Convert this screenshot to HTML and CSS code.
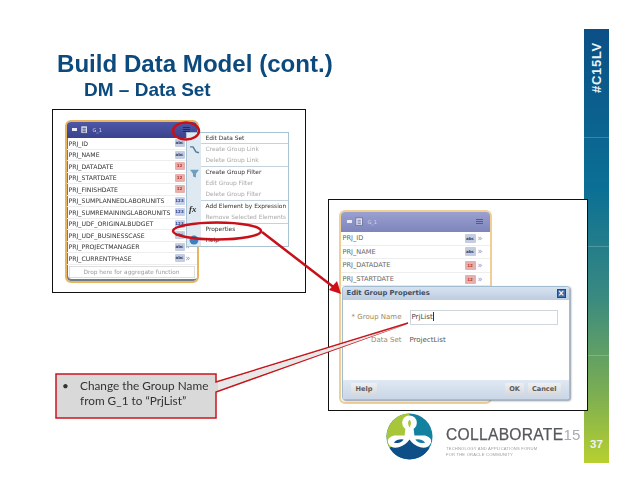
FILE: index.html
```html
<!DOCTYPE html>
<html lang="en">
<head>
    <meta charset="UTF-8">
    <title>Build Data Model (cont.)</title>
    <link rel="stylesheet" href="styles.css">
</head>
<body>
<div class="slide">

    <!-- Titles -->
    <header class="titulos">
        <h1>Build Data Model (cont.)</h1>
        <h2>DM – Data Set</h2>
    </header>

    <!-- Side band -->
    <aside class="banda">
        <span class="hashtag">#C15LV</span>
        <span class="pagina">37</span>
    </aside>

    <!-- First screenshot: group menu -->
    <section class="captura captura-menu">
        <div class="panel panel-chico">
            <div class="panel-head">
                <span class="cuadrito"></span>
                <svg class="icono-grupo" viewBox="0 0 12 12"><rect x="1" y="1" width="8" height="9" fill="#d5d9ea" stroke="#39427f"/><path d="M3 4h4M3 6h4M3 8h4" stroke="#39427f"/></svg>
                <span class="panel-nombre">G_1</span>
                <span class="panel-menu"><i></i><i></i><i></i></span>
            </div>
            <ul class="filas">
                <li>PRJ_ID<b class="tipo abc">abc</b></li>
                <li>PRJ_NAME<b class="tipo abc">abc</b></li>
                <li>PRJ_DATADATE<b class="tipo fecha">12</b></li>
                <li>PRJ_STARTDATE<b class="tipo fecha">12</b></li>
                <li>PRJ_FINISHDATE<b class="tipo fecha">12</b></li>
                <li>PRJ_SUMPLANNEDLABORUNITS<b class="tipo num">123</b></li>
                <li>PRJ_SUMREMAININGLABORUNITS<b class="tipo num">123</b></li>
                <li>PRJ_UDF_ORIGINALBUDGET<b class="tipo num">123</b></li>
                <li>PRJ_UDF_BUSINESSCASE<b class="tipo abc">abc</b></li>
                <li>PRJ_PROJECTMANAGER<b class="tipo abc">abc</b><em>»</em></li>
                <li>PRJ_CURRENTPHASE<b class="tipo abc">abc</b><em>»</em></li>
            </ul>
            <div class="soltar">Drop here for aggregate function</div>
        </div>

        <div class="menu">
            <div class="menu-iconos">
                <svg viewBox="0 0 14 114">
                    <path d="M3 14l3 0 3 5 3 1" fill="none" stroke="#4f7f96" stroke-width="1.5"/>
                    <path d="M3 37h9l-3 4v4l-3-1v-3z" fill="#6f9fc0"/>
                    <text x="2" y="80" class="fx">fx</text>
                    <circle cx="7" cy="108" r="4.5" fill="#3d7fc0"/>
                </svg>
            </div>
            <ul>
                <li class="sep">Edit Data Set</li>
                <li class="off">Create Group Link</li>
                <li class="off sep">Delete Group Link</li>
                <li>Create Group Filter</li>
                <li class="off">Edit Group Filter</li>
                <li class="off sep">Delete Group Filter</li>
                <li>Add Element by Expression</li>
                <li class="off sep">Remove Selected Elements</li>
                <li>Properties</li>
                <li>Help</li>
            </ul>
        </div>
    </section>

    <!-- Second screenshot: properties dialog -->
    <section class="captura captura-dialogo">
        <div class="panel panel-grande">
            <div class="panel-head">
                <span class="cuadrito"></span>
                <svg class="icono-grupo" viewBox="0 0 12 12"><rect x="1" y="1" width="8" height="9" fill="#e3e5f0" stroke="#6a70a0"/><path d="M3 4h4M3 6h4M3 8h4" stroke="#6a70a0"/></svg>
                <span class="panel-nombre">G_1</span>
                <span class="panel-menu"><i></i><i></i><i></i></span>
            </div>
            <ul class="filas">
                <li>PRJ_ID<b class="tipo abc">abc</b><em>»</em></li>
                <li>PRJ_NAME<b class="tipo abc">abc</b><em>»</em></li>
                <li>PRJ_DATADATE<b class="tipo fecha">12</b><em>»</em></li>
                <li>PRJ_STARTDATE<b class="tipo fecha">12</b><em>»</em></li>
            </ul>
        </div>

        <div class="dialogo">
            <div class="dialogo-titulo">
                <span>Edit Group Properties</span>
                <span class="cerrar">×</span>
            </div>
            <div class="dialogo-cuerpo">
                <div class="campo">
                    <label>* Group Name</label>
                    <div class="entrada">PrjList<span class="cursor"></span></div>
                </div>
                <div class="campo">
                    <label>Data Set</label>
                    <span>ProjectList</span>
                </div>
            </div>
            <div class="dialogo-pie">
                <span class="boton boton-ayuda">Help</span>
                <span class="relleno"></span>
                <span class="boton">OK</span>
                <span class="boton">Cancel</span>
            </div>
        </div>
    </section>

    <!-- Red annotations over the screenshots -->
    <svg class="notas" viewBox="0 0 638 493">
        <ellipse cx="186" cy="131" rx="13" ry="8.5" class="trazo"/>
        <ellipse cx="217" cy="231" rx="44" ry="8.5" class="trazo"/>
        <path d="M262 232L336 289" class="trazo"/>
        <path d="M341 294L329 290 337 281z" fill="#d01018"/>
        <path d="M56 374H216V382L408 323 216 392V418H56z" fill="#d9d9d9" stroke="#c8161d" stroke-width="1.5"/>
        <path d="M218 382.5L404 325 218 390z" fill="#e8e8e8"/>
    </svg>

    <!-- Callout -->
    <div class="llamada">
        <span class="vineta">•</span>
        <p>Change the Group Name<br>from G_1 to “PrjList”</p>
    </div>

    <!-- Logo -->
    <div class="logo">
        <svg class="logo-marca" viewBox="0 0 48 48">
            <circle cx="24" cy="24" r="23.5" fill="#12829f"/>
            <path d="M24 24L3.7 35.7A23.5 23.5 0 0 1 24 .5z" fill="#a8c63a"/>
            <path d="M24 24L44.3 35.7A23.5 23.5 0 0 1 3.7 35.7z" fill="#0e4f87"/>
            <circle cx="24" cy="10" r="7.5" fill="#fff"/>
            <path d="M20 14L19 23 8 23Q1 25 2 30 5 37 13 35 20 33 24 27 28 33 35 35 43 37 46 30 47 25 40 23L29 23 28 14z" fill="#fff"/>
            <path d="M24 7Q27 10 24 15 21 10 24 7z" fill="#a8c63a"/>
            <path d="M8 30Q12 26 18 27 15 32 8 30z" fill="#0e4f87"/>
            <path d="M40 30Q36 26 30 27 33 32 40 30z" fill="#12829f"/>
        </svg>
        <div class="logo-textos">
            <div class="logo-nombre">COLLABORATE<span>15</span></div>
            <div class="logo-lema">TECHNOLOGY AND APPLICATIONS FORUM<br>FOR THE ORACLE COMMUNITY</div>
        </div>
    </div>

</div>
</body>
</html>
```

FILE: styles.css
```css
html, body {
    margin: 0;
    background-color: white;
}
.slide {
    position: relative;
    width: 638px;
    height: 493px;
    overflow: hidden;
    font-family: "Liberation Sans", Arial, sans-serif;
    filter: blur(0.4px);
}

/* titles */
.titulos {
    padding: 50px 0 0 57px;
    color: #0c4a7e;
}
.titulos h1 {
    margin: 0;
    font-size: 24.1px;
    line-height: 28px;
}
.titulos h2 {
    margin: 0 0 0 27px;
    font-size: 19px;
    line-height: 24px;
}

/* side band */
.banda {
    position: absolute;
    left: 584px;
    top: 29px;
    width: 25px;
    height: 434px;
    display: flex;
    flex-direction: column;
    align-items: center;
    justify-content: space-between;
    background:
        repeating-linear-gradient(transparent 0 108px, rgba(255, 255, 255, 0.2) 108px 109px),
        linear-gradient(#0b4f86 0%, #0b7095 37%, #3a8a80 62%, #7fb050 85%, #b7d030 100%);
    color: #eef3f6;
    font-weight: bold;
}
.hashtag {
    margin-top: 13px;
    writing-mode: vertical-rl;
    transform: rotate(180deg);
    font-size: 13px;
    letter-spacing: 0.7px;
}
.pagina {
    margin-bottom: 13px;
    font-size: 11.5px;
}

/* screenshots */
.captura {
    position: absolute;
    box-sizing: border-box;
    background-color: white;
    border: 1.5px solid #111;
}
.captura-menu {
    left: 52px;
    top: 109px;
    width: 254px;
    height: 184px;
}
.captura-dialogo {
    left: 328px;
    top: 199px;
    width: 260px;
    height: 212px;
}

/* data set panel */
.panel {
    position: absolute;
    box-sizing: border-box;
    background-color: white;
    border-style: solid;
    border-color: #e9b65e;
    overflow: hidden;
    font-family: "DejaVu Sans", sans-serif;
    color: #333;
}
.panel-chico {
    left: 11.5px;
    top: 9.5px;
    width: 134px;
    height: 163px;
    border-width: 2.5px;
    border-radius: 6px;
    font-size: 6.2px;
    box-shadow: inset 1px -2px 0 #6f7c8a;
}
.panel-grande {
    left: 9.5px;
    top: 9.5px;
    width: 153px;
    height: 194px;
    border-width: 2.5px;
    border-radius: 6px;
    border-color: #f0cf96;
    font-size: 6.6px;
    color: #666;
}
.panel-head {
    display: flex;
    align-items: center;
    gap: 3px;
    padding: 0 5px;
    background: linear-gradient(#4f58a6, #39428e);
    color: #d5d8ee;
    font-size: 5px;
}
.panel-chico .panel-head {
    height: 16.5px;
}
.panel-grande .panel-head {
    height: 20.5px;
    padding-left: 6px;
    background: linear-gradient(#9aa0cf, #7e85bb);
}
.cuadrito {
    width: 5px;
    height: 3px;
    background-color: #e8eaf6;
}
.icono-grupo {
    width: 10px;
    height: 10px;
}
.panel-menu {
    margin-left: auto;
    display: flex;
    flex-direction: column;
    gap: 1px;
    margin-right: 2px;
}
.panel-menu i {
    display: block;
    width: 7px;
    height: 1px;
    background-color: #222b60;
}
.panel-grande .panel-menu i {
    background-color: #545a88;
}
.filas {
    list-style: none;
    margin: 0;
    padding: 0;
}
.filas li {
    display: flex;
    align-items: center;
    border-bottom: 1px solid #eee;
    padding-left: 2px;
    white-space: nowrap;
}
.panel-chico .filas li {
    height: 11.5px;
    box-sizing: border-box;
}
.panel-grande .filas li {
    height: 13.6px;
    box-sizing: border-box;
}
.tipo {
    position: absolute;
    box-sizing: border-box;
    width: 10px;
    height: 8px;
    line-height: 8px;
    text-align: center;
    font-size: 4px;
    border-radius: 1px;
}
.panel-chico .tipo {
    left: 108px;
}
.panel-grande .tipo {
    left: 124px;
    width: 11px;
    height: 9px;
    line-height: 9px;
}
.abc {
    background-color: #c5cee0;
    color: #33406f;
}
.fecha {
    background-color: #e8b0ac;
    color: #b03a34;
}
.num {
    background-color: #c6d0ea;
    color: #2a3f8a;
}
.filas em {
    position: absolute;
    font-style: normal;
    font-size: 8px;
    color: #7f9cc8;
}
.panel-chico em {
    left: 119px;
}
.panel-grande em {
    left: 137px;
}
.soltar {
    margin: 1px 2px 0;
    border: 1px solid #ddd;
    height: 10px;
    line-height: 10px;
    text-align: center;
    color: #999;
    font-size: 5.8px;
}

/* popup menu */
.menu {
    position: absolute;
    left: 132.5px;
    top: 21.5px;
    box-sizing: border-box;
    width: 103px;
    height: 115px;
    display: flex;
    background-color: white;
    border: 1px solid #a9c3d3;
    font-family: "DejaVu Sans", sans-serif;
    font-size: 5.9px;
    color: #333;
}
.menu-iconos {
    width: 14px;
    flex: none;
    background-color: #dfe9f2;
}
.menu-iconos svg {
    display: block;
    width: 14px;
    height: 113px;
}
.fx {
    font-family: "Liberation Serif", serif;
    font-style: italic;
    font-weight: bold;
    font-size: 9px;
    fill: #333;
}
.menu ul {
    list-style: none;
    margin: 0;
    padding: 0 0 0 5px;
    flex: 1;
}
.menu li {
    box-sizing: border-box;
    height: 11.4px;
    line-height: 11px;
    margin-left: -5px;
    padding-left: 5px;
    white-space: nowrap;
    overflow: hidden;
}
.menu .off {
    color: #aaa;
}
.menu .sep {
    border-bottom: 1px solid #c4d2dc;
}

/* dialog */
.dialogo {
    position: absolute;
    left: 12.5px;
    top: 85.5px;
    box-sizing: border-box;
    width: 228px;
    height: 114px;
    display: flex;
    flex-direction: column;
    background-color: white;
    border: 1px solid #a3bdd0;
    border-radius: 3px;
    box-shadow: 1px 1px 2px rgba(60, 80, 110, 0.6);
    overflow: hidden;
    font-family: "DejaVu Sans", sans-serif;
    font-size: 7px;
    color: #555;
}
.dialogo-titulo {
    height: 13px;
    flex: none;
    display: flex;
    align-items: center;
    justify-content: space-between;
    padding: 0 3px 0 4px;
    background: linear-gradient(#d7e2ef, #bccde0);
    color: #3f4f63;
    font-weight: bold;
    font-size: 6.8px;
}
.cerrar {
    width: 7px;
    height: 7px;
    line-height: 7px;
    text-align: center;
    background-color: #3f6fa8;
    color: white;
    border: 0.5px solid #27497a;
    font-size: 8px;
}
.dialogo-cuerpo {
    flex: 1;
    padding-top: 10px;
    display: flex;
    flex-direction: column;
    gap: 8px;
}
.campo {
    display: flex;
    align-items: center;
    gap: 8px;
    min-height: 14px;
}
.campo label {
    width: 59px;
    text-align: right;
    color: #a08860;
    white-space: nowrap;
}
.entrada {
    box-sizing: border-box;
    width: 148px;
    height: 15px;
    line-height: 13px;
    padding-left: 1px;
    border: 1px solid #cfd6dc;
    color: #444;
}
.cursor {
    display: inline-block;
    width: 1px;
    height: 9px;
    background-color: #333;
    vertical-align: middle;
}
.dialogo-pie {
    height: 19px;
    flex: none;
    display: flex;
    align-items: center;
    gap: 4px;
    padding: 0 8px;
    background: linear-gradient(#e0e8f3, #c9d6e6);
}
.relleno {
    flex: 1;
}
.boton {
    height: 12px;
    line-height: 12px;
    padding: 0 4px;
    background: linear-gradient(#eef0f2, #d6d9dc);
    border-radius: 1px;
    color: #5b5b5b;
    font-size: 6.6px;
    font-weight: bold;
}
.boton-ayuda {
    padding: 0 5px;
}

/* annotations */
.notas {
    position: absolute;
    left: 0;
    top: 0;
    width: 638px;
    height: 493px;
}
.trazo {
    fill: none;
    stroke: #c8101a;
    stroke-width: 2.5;
}
.llamada {
    position: absolute;
    left: 56px;
    top: 374px;
    width: 160px;
    height: 44px;
    box-sizing: border-box;
    padding: 4px 0 0 6px;
    display: flex;
    font-family: Lato, sans-serif;
    font-size: 11.8px;
    line-height: 15px;
    color: #333;
}
.vineta {
    width: 18px;
    flex: none;
}
.llamada p {
    margin: 0;
    white-space: nowrap;
}

/* logo */
.logo {
    position: absolute;
    left: 386px;
    top: 413px;
    display: flex;
    gap: 13px;
    align-items: flex-start;
}
.logo-marca {
    width: 47px;
    height: 47px;
}
.logo-textos {
    padding-top: 14px;
}
.logo-nombre {
    font-size: 15.6px;
    line-height: 16px;
    letter-spacing: 0.3px;
    color: #55585c;
    white-space: nowrap;
    -webkit-text-stroke: 0.25px #55585c;
}
.logo-nombre span {
    font-size: 15px;
    color: #a9adb1;
    -webkit-text-stroke: 0;
}
.logo-lema {
    margin-top: 3px;
    font-size: 4.1px;
    line-height: 6px;
    letter-spacing: 0.2px;
    color: #9a9da0;
    white-space: nowrap;
    -webkit-text-stroke: 0;
}
```
